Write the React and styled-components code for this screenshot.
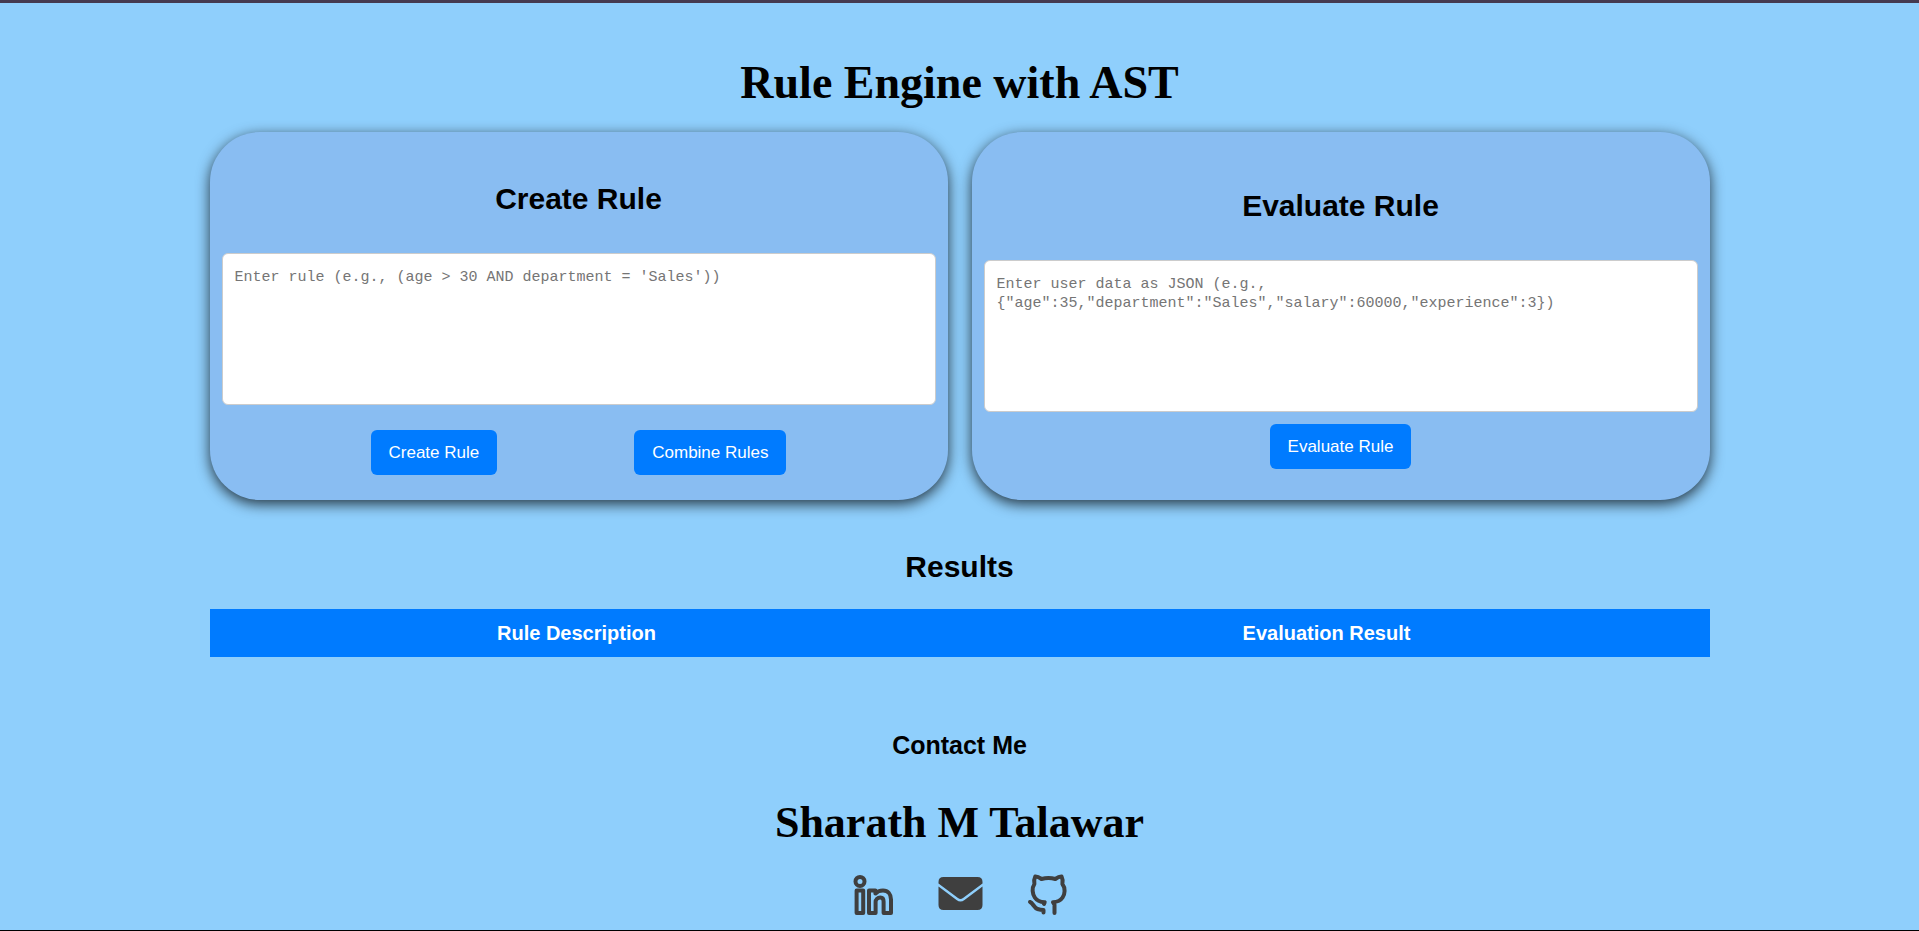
import React from "react";
import styled, { createGlobalStyle } from "styled-components";

const GlobalStyle = createGlobalStyle`
  * { box-sizing: border-box; }
  body {
    margin: 0;
    background: #8fcffc;
    color: #000;
    font-family: "Liberation Sans", Arial, sans-serif;
  }
`;

const Page = styled.div`
  min-height: 100vh;
  border-top: 3px solid #453a50;
  border-bottom: 1px solid #000;
`;

const Container = styled.main`
  width: calc(100% - 40px);
  max-width: 1500px;
  margin: 0 auto;
  padding-top: 54px;
`;

const Title = styled.h1`
  margin: 0;
  font: bold 46px/52px Georgia, "Liberation Serif", serif;
  text-align: center;
`;

const Panels = styled.div`
  display: flex;
  gap: 24px;
  margin-top: 23px;
`;

const Panel = styled.section`
  flex: 1;
  min-height: 368px;
  padding: ${(p) => (p.$lowered ? "7px 12px 0" : "0 12px")};
  border-radius: 50px;
  background: #89bdf2;
  box-shadow: 0 4px 14px rgba(0, 0, 0, 0.75);
`;

const PanelTitle = styled.h2`
  margin: 0;
  padding: 49px 0 36px;
  font-size: 30px;
  line-height: 36px;
  text-align: center;
`;

const Field = styled.textarea`
  display: block;
  width: 100%;
  height: 152px;
  margin: 0;
  padding: 14px 12px;
  border: 1px solid #ccc;
  border-radius: 6px;
  background: #fff;
  font: 15px/19px "Liberation Mono", monospace;
  resize: none;
  &::placeholder { color: #757575; }
`;

const Actions = styled.div`
  display: flex;
  justify-content: space-evenly;
  margin-top: ${(p) => (p.$tight ? "12px" : "25px")};
  padding: 0 12px;
`;

const Button = styled.button`
  height: 45px;
  padding: 0 18px;
  border: 0;
  border-radius: 6px;
  background: #007bff;
  color: #fff;
  font: 17px/20px "Liberation Sans", Arial, sans-serif;
  cursor: pointer;
`;

const ResultsTitle = styled.h2`
  margin: 49px 0 24px;
  font-size: 30px;
  line-height: 36px;
  text-align: center;
`;

const Table = styled.table`
  width: 100%;
  border-collapse: collapse;
  table-layout: fixed;
`;

const HeadCell = styled.th`
  height: 48px;
  padding: 0 28px 0 12px;
  background: #007bff;
  color: #fff;
  font-size: 20px;
  line-height: 24px;
`;

const Footer = styled.footer`
  display: flex;
  flex-direction: column;
  align-items: center;
  padding-top: 74px;
`;

const ContactTitle = styled.h3`
  margin: 0;
  font-size: 25px;
  line-height: 28px;
`;

const Name = styled.h2`
  margin: 40px 0 22px;
  font: bold 44px/48px Georgia, "Liberation Serif", serif;
`;

const Links = styled.nav`
  display: flex;
  gap: 40px;
`;

const IconLink = styled.a`
  display: flex;
  color: #3f3f3f;
`;

function LinkedinIcon() {
  return (
    <svg width="48" height="48" viewBox="0 0 48 48" fill="none" stroke="currentColor" strokeWidth="4" strokeLinejoin="round">
      <circle cx="12" cy="12.4" r="4.5" />
      <path d="M8.600 21.600h6.600v22.400H8.600zM21 21.600h6.400v3c2.200-2.600 5-3.200 7.600-3.200 5 0 8 4 8 9v13.600h-7.400V32.500c0-2-.8-4-3.200-4-3 0-4.800 2-4.800 4.500v11H21z" />
    </svg>
  );
}

function MailIcon() {
  return (
    <svg width="48" height="48" viewBox="0 0 48 48" fill="currentColor">
      <path d="M2.500 13q0-5 5-5h34q5 0 5 5v1.500L27 29q-2.500 1.800-5 0L2.500 14.500zM2.500 17.500L20.500 31q4 3 8 0l18-13.500V36q0 5-5 5h-34q-5 0-5-5z" />
    </svg>
  );
}

function GithubIcon() {
  return (
    <svg width="48" height="48" viewBox="0 0 48 48" fill="none" stroke="currentColor" strokeWidth="4" strokeLinecap="round" strokeLinejoin="round">
      <path d="M20 35l.7-1.800c-4.500-.2-7.900-1.600-9.900-4.700-2.400-3.600-3.200-9.300-.4-13.500-.6-2.600-.2-5.400.8-7.400 2.600-.2 4.600 1.200 6.300 2.400 4.700-1.200 9.300-1.200 13.800 0 1.700-1.200 3.700-2.600 6.300-2.400 1 2 1.400 4.800.8 7.400 3.200 4.200 2.600 9.900.2 13.500-2 3.100-5.200 4.500-9.600 4.700l1.500 2.500V44" />
      <path d="M6 33c3 1 4 6 7.500 7 2.500.8 4.500 1 6 1v2.500" />
    </svg>
  );
}

export default function App() {
  return (
    <>
      <GlobalStyle />
      <Page>
        <Container>
          <Title>Rule Engine with AST</Title>
          <Panels>
            <Panel>
              <PanelTitle>Create Rule</PanelTitle>
              <Field aria-label="Create Rule" placeholder="Enter rule (e.g., (age > 30 AND department = 'Sales'))" />
              <Actions>
                <Button type="button">Create Rule</Button>
                <Button type="button">Combine Rules</Button>
              </Actions>
            </Panel>
            <Panel $lowered>
              <PanelTitle>Evaluate Rule</PanelTitle>
              <Field
                aria-label="Evaluate Rule"
                placeholder={'Enter user data as JSON (e.g., {"age":35,"department":"Sales","salary":60000,"experience":3})'}
              />
              <Actions $tight>
                <Button type="button">Evaluate Rule</Button>
              </Actions>
            </Panel>
          </Panels>
          <ResultsTitle>Results</ResultsTitle>
          <Table>
            <thead>
              <tr>
                <HeadCell scope="col">Rule Description</HeadCell>
                <HeadCell scope="col">Evaluation Result</HeadCell>
              </tr>
            </thead>
          </Table>
        </Container>
        <Footer>
          <ContactTitle>Contact Me</ContactTitle>
          <Name>Sharath M Talawar</Name>
          <Links aria-label="Contact links">
            <IconLink href="#linkedin" aria-label="LinkedIn"><LinkedinIcon /></IconLink>
            <IconLink href="#mail" aria-label="Email"><MailIcon /></IconLink>
            <IconLink href="#github" aria-label="GitHub"><GithubIcon /></IconLink>
          </Links>
        </Footer>
      </Page>
    </>
  );
}
